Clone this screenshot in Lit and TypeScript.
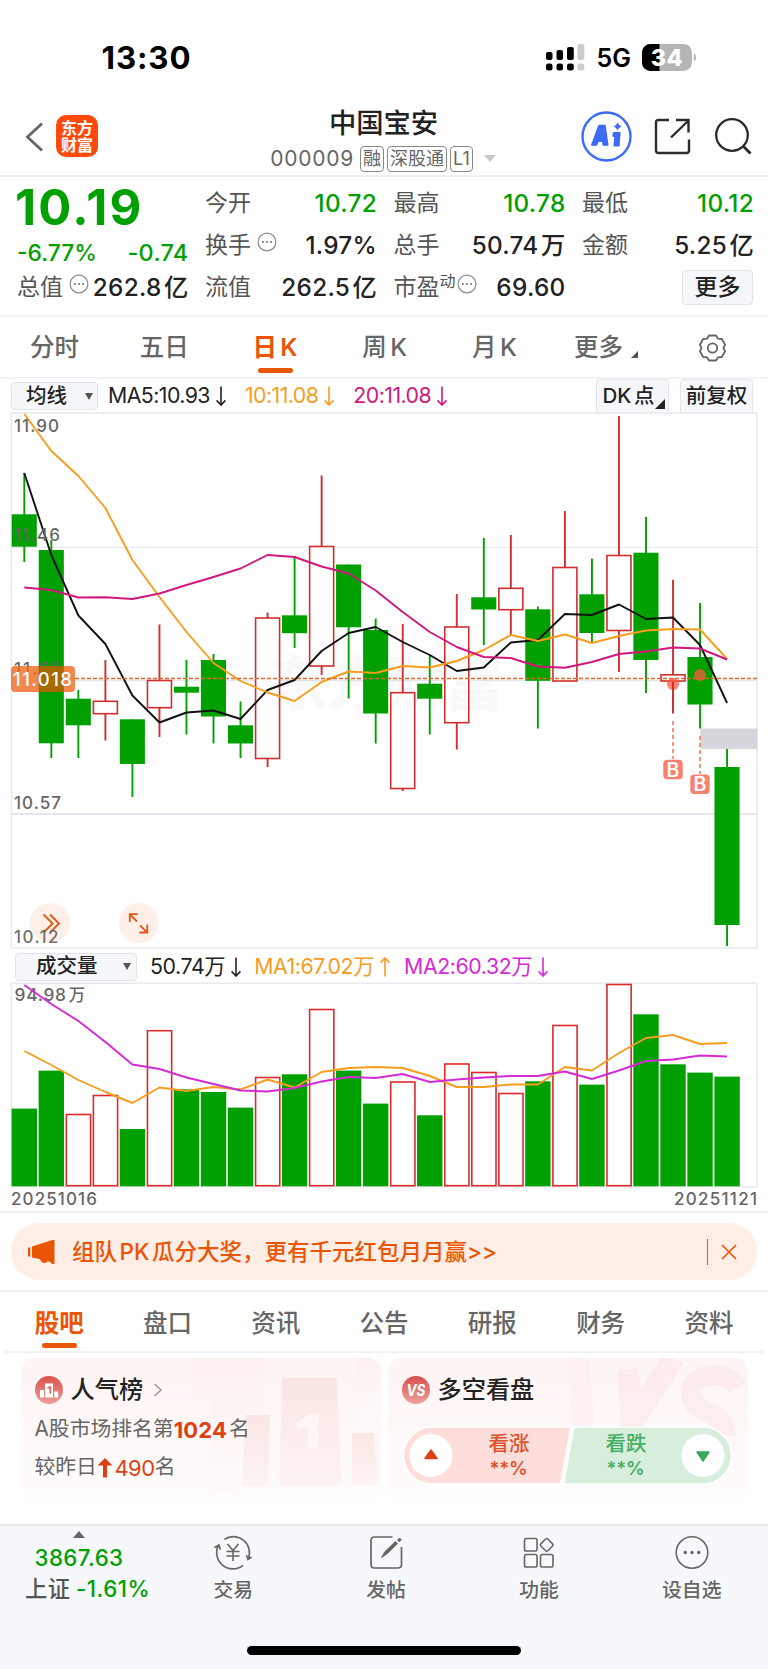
import { LitElement, html, svg, css } from "lit";
import { customElement } from "lit/decorators.js";

const GREEN = "#00a000";
const RED = "#cf2f2f";
const X0 = 24.3;
const STEP = 27.03;
const cx = (i: number) => X0 + STEP * i;

// [rising, high, body top, body bottom, low]
const candles: [number, number, number, number, number][] = [
  [0, 473, 514.3, 546.7, 562], [0, 540, 550, 743.3, 758], [0, 690, 698.7, 725.3, 758],
  [1, 660, 701.3, 713.7, 740.5], [0, 719.3, 719.3, 764, 797], [1, 624.5, 680.5, 707.7, 737],
  [0, 660, 686.7, 692.7, 734.5], [0, 654, 660, 716.5, 743.5], [0, 701.5, 725.3, 743.5, 758],
  [1, 612.5, 618, 758.5, 767], [0, 556, 615.3, 633.2, 648], [1, 475.5, 546.5, 666, 675],
  [0, 564.5, 564.5, 627.3, 698.5], [0, 618.5, 630, 713.5, 743.5], [1, 624, 692.7, 788.5, 791],
  [0, 655.5, 683.7, 698.7, 734.5], [1, 594, 627, 722.7, 749.5], [0, 538, 597.3, 609.5, 645],
  [1, 535, 588.3, 609.7, 635], [0, 606.5, 609.3, 680.8, 728.5], [1, 511, 567.5, 681, 681],
  [0, 558.5, 594.3, 633, 642.5], [1, 416, 555.5, 630.5, 672], [0, 517, 552.7, 660, 693],
  [1, 579.7, 674.8, 681, 713.5], [0, 603, 657, 704.5, 728.5], [0, 749, 767, 925, 946],
];
const ma5 = [473, 555, 615.5, 644, 695.5, 722.5, 712.5, 710.5, 719, 690, 680, 651, 633, 627, 642, 655, 671, 667.5, 642.5, 640, 614, 615, 604.5, 619, 617.5, 645, 703];
const ma10 = [414, 451, 476, 508, 560, 597, 632, 663, 681, 692.5, 701, 682, 671.5, 673, 666, 667.5, 661, 650, 635, 641, 634.5, 643, 636, 630.5, 629, 629.5, 659];
const ma20 = [587.5, 590, 597.5, 597.3, 599, 593.5, 585, 577, 568.5, 555, 557, 566.5, 573.5, 590.5, 612, 632, 647, 657, 658, 666.5, 667.8, 662, 654, 651.5, 647.5, 648.5, 659.5];
const volumes = [1109.3, 1071.3, 1114.5, 1095.5, 1129.7, 1030.7, 1090, 1092.7, 1108.3, 1077.5, 1075, 1009.5, 1071.3, 1104.3, 1082, 1116, 1064, 1072.5, 1093.5, 1082, 1025.5, 1085.3, 984.5, 1015, 1065, 1073.3, 1077.3];
const risingVolumes = new Set([2, 3, 5, 9, 11, 14, 16, 17, 18, 20, 22]);
const vma1 = [1051, 1065, 1080, 1092, 1103, 1087.5, 1091, 1087, 1089.5, 1079.5, 1087.5, 1072, 1068, 1067, 1068, 1076, 1087, 1087, 1084.5, 1084.5, 1067, 1070.5, 1053, 1038, 1035, 1044, 1043];
const vma2 = [985, 1004, 1021, 1042, 1064.5, 1069, 1077.5, 1084, 1090.5, 1091.5, 1088, 1081.5, 1077, 1078, 1074, 1082, 1079.5, 1077.5, 1076, 1076, 1071.5, 1079, 1070.5, 1061, 1059.5, 1055.5, 1056.5];
const line = (v: number[], color: string) =>
  svg`<polyline points=${v.map((y, i) => `${cx(i).toFixed(1)},${y}`).join(" ")} fill="none" stroke=${color} stroke-width="1.9" stroke-linejoin="round"/>`;

const FONT = css`
  :host { display: block; font-family: Inter, "Noto Sans CJK SC", sans-serif; line-height: 1; }
  * { box-sizing: border-box; }
  svg { display: block; flex: none; }
  svg text { font-family: Inter, "Noto Sans CJK SC", sans-serif; }
`;

const info = html`<svg width="20" height="20" viewBox="0 0 20 20"><circle cx="10" cy="10" r="8.9" fill="none" stroke="#8c8c8c" stroke-width="1.2"/><g fill="#777"><circle cx="5.9" cy="10" r="1.1"/><circle cx="10" cy="10" r="1.1"/><circle cx="14.1" cy="10" r="1.1"/></g></svg>`;
const arrow = (up = false) => html`<svg class="arr" width="12" height="20" viewBox="0 0 12 20"><path d=${up ? "M6 19.5V1M1.6 5.6 6 1l4.4 4.6" : "M6 .5V19M1.6 14.4 6 19l4.4-4.6"} fill="none" stroke="currentColor" stroke-width="1.6"/></svg>`;

@customElement("k-chart")
class KChart extends LitElement {
  static styles = [FONT];
  render() {
    return html`<svg width="768" height="537" viewBox="0 412 768 537">
      <rect x="11.4" y="413" width="745.6" height="535" fill="#fff" stroke="#e9eaee" stroke-width="1.6"/>
      <path d="M11 547.5H757M11 680.7H757" stroke="#e6e8ef" stroke-width="1.2"/>
      <path d="M11 814H757" stroke="#e4e5ee" stroke-width="2"/>
      <rect x="700.3" y="728.5" width="57" height="20.5" fill="#d4d6dc"/>
      ${candles.map(([up, h, t, b, l], i) => {
        const x = cx(i);
        return up
          ? svg`<path d=${`M${x} ${h}V${t}M${x} ${b}V${l}`} stroke=${RED} stroke-width="1.9"/><rect x=${x - 12} y=${t} width="24" height=${b - t} fill="#fff" stroke=${RED} stroke-width="1.6"/>`
          : svg`<path d=${`M${x} ${h}V${l}`} stroke=${GREEN} stroke-width="1.9"/><rect x=${x - 12.6} y=${t} width="25.1" height=${b - t} fill=${GREEN}/>`;
      })}
      <text x="268" y="706" font-size="60" font-weight="700" textLength="236" fill="#777" opacity=".04">东方财富</text>
      ${line(ma5, "#111")}${line(ma10, "#f69d1e")}${line(ma20, "#d0187f")}
      <g font-size="17" font-weight="500" fill="#666">
        <text x="14" y="431.5" textLength="45">11.90</text>
        <text x="14" y="540.8" textLength="46">11.46</text>
        <text x="14" y="675" textLength="45">11.01</text>
        <text x="14" y="808.8" textLength="47">10.57</text>
      </g>
      <path d="M75 678.5H757" stroke="#e2662a" stroke-width="1.6" stroke-dasharray="4 2"/>
      <rect x="11" y="666" width="64" height="26" rx="4" fill="#ef6a22" fill-opacity=".8"/>
      <path d="M38.7 666h25v26h-25z" fill="#a56a00"/>
      <text x="13" y="685.5" font-size="18.5" font-weight="500" fill="#fff" textLength="59">11.018</text>
      <g fill="#fb5a3c" fill-opacity=".75"><circle cx="673" cy="684" r="6"/><circle cx="700" cy="675" r="6"/></g>
      <path d=${`M${cx(24)} 682V713`} stroke=${RED} stroke-width="1.8"/>
      <path d="M673 721V759M700 736V774" stroke="#f58070" stroke-width="1.7" stroke-dasharray="4 3"/>
      <g fill="#f8806f"><rect x="663.3" y="759.8" width="19.4" height="19.4" rx="4"/><rect x="690.3" y="774.6" width="19.4" height="19.4" rx="4"/></g>
      <g fill="#fff" font-size="19.5" font-weight="600" text-anchor="middle"><text x="673" y="776.6">B</text><text x="700" y="791.4">B</text></g>
      <circle cx="50" cy="923" r="20" fill="#fef0e9"/><circle cx="138.7" cy="923" r="20" fill="#fef0e9"/>
      <path d="M43.5 914.5 52.7 923.5 43.5 932.5M50 914.5 59 923.5 50 932.5" fill="none" stroke="#e4560f" stroke-width="1.8"/>
      <path d="M129.8 922V914.2h8M130 914.5l7 7M147.3 924.5v8h-8M147 932.3l-7-7" fill="none" stroke="#e4560f" stroke-width="1.8"/>
      <text x="14" y="942.6" font-size="17" font-weight="500" fill="#666" fill-opacity=".95" textLength="44.5">10.12</text>
    </svg>`;
  }
}

@customElement("volume-chart")
class VolumeChart extends LitElement {
  static styles = [FONT];
  render() {
    return html`<svg width="768" height="229" viewBox="0 982 768 229">
      <rect x="11.4" y="983.3" width="745.6" height="203.5" fill="#fff" stroke="#e9eaee" stroke-width="1.6"/>
      <text x="14.5" y="1000.6" font-size="17.3" font-weight="500" fill="#666" textLength="51.5">94.98</text>
      <text x="68.8" y="1000.8" font-size="16.5" font-weight="500" fill="#666">万</text>
      ${volumes.map((t, i) =>
        risingVolumes.has(i)
          ? svg`<rect x=${cx(i) - 12} y=${t} width="24.2" height=${1185.7 - t} fill="#fff" stroke="#dc2a2a" stroke-width="1.6"/>`
          : svg`<rect x=${cx(i) - 12.7} y=${t - 0.7} width="25.4" height=${1187 - t} fill=${GREEN}/>`)}
      ${line(vma1, "#f69d1e")}${line(vma2, "#d42bd4")}
      <g font-size="17" font-weight="500" fill="#666">
        <text x="11" y="1204.6" textLength="86">20251016</text>
        <text x="674" y="1204.6" textLength="83">20251121</text>
      </g>
    </svg>`;
  }
}

@customElement("app-root")
class AppRoot extends LitElement {
  static styles = [FONT, css`
    :host { width: 768px; height: 1669px; background: #fff; color: #222; overflow: hidden; }
    .row { display: flex; align-items: center; }
    .status { height: 100px; padding: 14px 71px 0 101.5px; }
    .time { font-size: 31.3px; font-weight: 700; color: #000; letter-spacing: .9px; flex: 1; padding-top: 3px; }
    .net { font-size: 25px; font-weight: 600; color: #000; margin: 3px 11px 0 12px; }
    .head { height: 77px; border-bottom: 2px solid #efefef; padding: 0 16px 0 25px; }
    .back { margin-top: -2px; }
    .logo { width: 42px; height: 42px; border-radius: 10px; background: #ff4a0a; color: #fff; display: grid; place-content: center; margin: -3px 0 0 12px; font-size: 16px; font-weight: 700; line-height: 17px; padding-top: 1px; }
    .title { flex: 1; display: flex; flex-direction: column; align-items: center; margin: 5px 0 0 -1px; padding-left: 89px; }
    .name { font-size: 27.3px; font-weight: 500; line-height: 30px; }
    .code { display: flex; align-items: center; gap: 3px; font-size: 21px; letter-spacing: .75px; color: #666; margin-top: 7px; line-height: 26px; margin-left: -1px; }
    .code span:first-child { margin-right: 3px; }
    .tag { font-size: 18px; letter-spacing: 0; border: 1.3px solid #888; border-radius: 4px; height: 26px; line-height: 23px; padding: 0 2px; }
    .down { border: 6.5px solid transparent; border-top: 7px solid #c8c8c8; border-bottom: 0; margin-left: 8px; }
    .acts { gap: 22px; margin-top: -2px; }
    .acts svg:last-child { margin-left: 2px; }
    .quote { height: 140px; padding: 5px 15px 0 17px; display: grid; grid-template-columns: 170.5px repeat(3, 171px); column-gap: 17.5px; grid-template-rows: repeat(3, 42px); border-bottom: 2px solid #f3f3f5; align-items: center; font-size: 23px; }
    .cell { display: flex; align-items: center; white-space: nowrap; padding-top: 1px; }
    .cell .l { color: #555; font-size: 23px; }
    .cell .v { margin-left: auto; font-weight: 500; font-size: 24.3px; letter-spacing: .3px; word-spacing: -4.5px; color: #222; margin-right: -1px; }
    .cell .v.g, .g { color: #00a000; }
    .cell .i { margin: -7px 0 0 6px; }
    .cell sup + .i { margin-left: 1px; }
    .main { grid-row: span 2; display: flex; flex-direction: column; justify-content: space-between; height: 84px; padding: 6px 0 1px; }
    .price { font-size: 49px; font-weight: 700; color: #00a000; letter-spacing: 2.2px; line-height: 40px; margin-left: -2px; }
    .chg { display: flex; justify-content: space-between; font-size: 22.8px; font-weight: 500; color: #00a000; line-height: 24px; }
    .chg span:last-child { font-size: 23.5px; letter-spacing: .3px; margin-right: -1px; }
    .btn { background: #f6f7fa; border: 1.5px solid #e1e4ea; border-radius: 4px; display: flex; align-items: center; justify-content: center; font-weight: 500; color: #222; }
    .more { width: 71px; height: 35px; margin-left: auto; font-size: 23px; }
    sup { font-size: 16px; align-self: flex-start; margin-top: -2px; line-height: 16px; color: #555; }
    .tabs { border-bottom: 2px solid #f3f3f5; display: grid; align-items: center; font-size: 24.5px; font-weight: 500; color: #666; text-align: center; word-spacing: -3px; }
    .ktabs { height: 62px; grid-template-columns: 109px 110.5px 111px 108.5px 111px 112px 100px; padding-top: 1px; }
    .tab { position: relative; display: flex; justify-content: center; align-items: center; white-space: nowrap; }
    .on { color: #ea5504; font-weight: 600; }
    .on::after { content: ""; position: absolute; left: 50%; bottom: -13px; width: 35px; height: 5px; margin-left: -17.5px; border-radius: 3px; background: #ea5504; }
    .corner { width: 0; height: 0; border-left: 7px solid transparent; border-bottom: 7px solid #555; margin: 14px 0 0 8px; }
    .corner.big { border-left-width: 10px; border-bottom: 10px solid #222; margin: 16px 0 0 1px; }
    .mas { height: 33px; padding: 1px 15px 0 11px; font-size: 21.3px; color: #222; letter-spacing: -.55px; }
    .mas > span { display: flex; align-items: center; gap: 5px; white-space: nowrap; }
    .mas > .btn { letter-spacing: 0; font-size: 20.5px; width: 73px; height: 35px; }
    .mas > .drop { height: 28px; width: 87px; padding: 0 4px 0 14px; justify-content: space-between; }
    .mas > .drop.vol { width: 122px; padding: 0 5px 0 20px; margin-left: 4px; }
    .mas > .dk { margin-left: auto; gap: 0; padding-left: 3px; word-spacing: -3px; }
    .mas > .fq { margin-left: 11px; }
    .drop::after { content: ""; border: 4.5px solid transparent; border-top: 7.5px solid #555; border-bottom: 0; }
    .o { color: #f69d1e; margin-left: 18px; } .p { color: #d0187f; margin-left: 18px; } .m { color: #d42bd4; margin-left: 13px; }
    .volrow { letter-spacing: -.4px; padding-top: 2px; } .volrow .o { margin-left: 12px; }
    .first { margin-left: 10px; } .volrow .first { margin-left: 13px; }
    .arr { margin-top: 1px; }
    .sep { border-top: 2px solid #efefef; }
    .banner { margin: 10px 11px; height: 57px; border-radius: 29px; background: #feeee6; color: #ea5504; padding: 1px 20px 0 17px; font-size: 22.5px; font-weight: 500; word-spacing: -3.5px; }
    .banner .t { margin-left: 17px; flex: 1; white-space: nowrap; }
    .banner i { width: 1.5px; height: 26px; background: #ea5504; margin-right: 13px; }
    .btabs { grid-template-columns: repeat(7, 108.3px); margin: 0 5px; height: 61px; border-color: #f0f0f2; padding-top: 3px; }
    .btabs .on::after { bottom: -12.5px; }
    .cards { display: grid; grid-template-columns: 360px 360px; gap: 7px; padding: 5px 20.5px 0; height: 171px; }
    .card { height: 143px; border-radius: 14px; background: linear-gradient(#fef5f4, #fffafa 75%, #fffdfd); position: relative; padding: 18px 0 0 14px; overflow: hidden; }
    .card > svg.bg { position: absolute; left: 0; top: 0; }
    .ct { display: flex; align-items: center; gap: 8px; height: 28px; font-size: 24.2px; font-weight: 500; position: relative; }
    .chev { margin-left: 2px; }
    .tx { font-size: 20.8px; color: #666; position: relative; white-space: nowrap; display: flex; align-items: center; height: 24px; margin-top: 13.5px; }
    .tx + .tx { margin-top: 14px; }
    .tx b { color: #dd4113; font-size: 22px; letter-spacing: .2px; } .tx em { color: #dd4113; font-style: normal; font-size: 22px; letter-spacing: -.5px; }
    .vs { position: absolute; left: 14.5px; top: 67.5px; }
    .bottom { height: 145px; background: #f7f8fb; border-top: 2px solid #e8e8ea; display: grid; grid-template-columns: 157px 152.5px 153px 153px 152.5px; position: relative; }
    .nav { display: flex; flex-direction: column; align-items: center; padding-top: 7.5px; font-size: 19.8px; font-weight: 500; color: #666; gap: 11px; white-space: nowrap; }
    .idx { display: flex; flex-direction: column; align-items: center; padding: 5px 0 0 18px; white-space: nowrap; }
    .idx i { border: 6px solid transparent; border-bottom: 7px solid #666; border-top: 0; margin-right: 17px; }
    .idx .n { font-size: 22.3px; font-weight: 500; margin: 9px 17px 0 0; line-height: 22px; letter-spacing: .4px; }
    .idx .s { margin-top: 9px; font-size: 22.3px; font-weight: 500; color: #555; line-height: 22px; letter-spacing: .5px; word-spacing: -1px; }
    .home { position: absolute; left: 247px; top: 119.5px; width: 274px; height: 9.5px; border-radius: 5px; background: #000; }
  `];

  render() {
    const cell = (l: string, v: string, g = false) => html`<div class="cell"><span class="l">${l}</span><span class="v ${g ? "g" : ""}">${v}</span></div>`;
    return html`
      <div class="row status">
        <div class="time">13:30</div>
        <svg width="39" height="27" viewBox="0 0 39 27">
          <g><rect x="0" y="8" width="6.5" height="8" rx="2"/><rect x="10.5" y="6" width="6.5" height="10" rx="2"/><rect x="21" y="3" width="6.8" height="13" rx="2"/>
          <rect x="0" y="19.5" width="6.5" height="7" rx="2.3"/><rect x="10.5" y="19.5" width="6.5" height="7" rx="2.3"/><rect x="21" y="19.5" width="6.8" height="7" rx="2.3"/></g>
          <g fill="#ccc"><rect x="31.5" y="0" width="6.8" height="16" rx="2"/><rect x="31.5" y="19.5" width="6.8" height="7" rx="2.3"/></g>
        </svg>
        <div class="net">5G</div>
        <svg width="55" height="27" viewBox="0 0 55 27">
          <defs><clipPath id="bat"><rect width="50" height="27" rx="8.5"/></clipPath></defs>
          <g clip-path="url(#bat)"><rect width="50" height="27" fill="#b5b5b5"/><rect width="17.5" height="27" fill="#000"/></g>
          <path d="M51.8 9.5c3 1 3 7 0 8z" fill="#b5b5b5"/>
          <text x="8.7" y="21.8" font-size="23.5" font-weight="800" fill="#fff" textLength="32">34</text>
        </svg>
      </div>
      <div class="row head">
        <svg class="back" width="19" height="30" viewBox="0 0 19 30"><path d="M17 1.5 2.5 15 17 28.5" fill="none" stroke="#666" stroke-width="2.8"/></svg>
        <div class="logo"><span>东方</span><span>财富</span></div>
        <div class="title">
          <div class="name">中国宝安</div>
          <div class="code"><span>000009</span><span class="tag">融</span><span class="tag">深股通</span><span class="tag">L1</span><span class="down"></span></div>
        </div>
        <div class="row acts">
          <svg width="51" height="51" viewBox="0 0 51 51"><circle cx="25.5" cy="25.5" r="24" fill="none" stroke="#3d6bf5" stroke-width="2.4"/>
            <g fill="#3d6bf5" stroke="#3d6bf5" stroke-linejoin="round" stroke-width="1.600"><path fill-rule="evenodd" d="M18 14.600h6l2.700 19.400h-4.500l-.5-3.800h-4.600l-1.600 3.800h-4.700zM21 21l-2 5.300h2.400z"/><path d="M32.600 21.800h6.200l-1 13h-4.500l.8-9.700h-2z"/></g>
            <path d="M36.600 11.200q.8 3 4 4.200-3.200 1-4 4.200-.8-3.200-4-4.200 3.200-1.200 4-4.200z" fill="#3d6bf5"/></svg>
          <svg width="37" height="37" viewBox="0 0 37 37"><path d="M15 2H4.500Q2 2 2 4.500V32.500Q2 35 4.500 35H32.500Q35 35 35 32.500V21.500M22 2H34.500V14.500M34.500 2.500 17 19.500" fill="none" stroke="#2c2c2c" stroke-width="2.400"/></svg>
          <svg width="37" height="37" viewBox="0 0 37 37"><circle cx="17" cy="17" r="15.800" fill="none" stroke="#2c2c2c" stroke-width="2.300"/><path d="M28 28 35.500 35.500" stroke="#2c2c2c" stroke-width="2.800"/></svg>
        </div>
      </div>
      <div class="quote">
        <div class="main"><div class="price">10.19</div><div class="chg"><span>-6.77%</span><span>-0.74</span></div></div>
        ${cell("今开", "10.72", true)}${cell("最高", "10.78", true)}${cell("最低", "10.12", true)}
        <div class="cell"><span class="l">换手</span><span class="i">${info}</span><span class="v">1.97%</span></div>
        ${cell("总手", "50.74 万")}${cell("金额", "5.25 亿")}
        <div class="cell"><span class="l">总值</span><span class="i">${info}</span><span class="v">262.8 亿</span></div>
        ${cell("流值", "262.5 亿")}
        <div class="cell"><span class="l">市盈</span><sup>动</sup><span class="i">${info}</span><span class="v">69.60</span></div>
        <div class="btn more">更多</div>
      </div>
      <div class="tabs ktabs">
        <div class="tab">分时</div><div class="tab">五日</div><div class="tab on">日 K</div><div class="tab">周 K</div><div class="tab">月 K</div>
        <div class="tab">更多<span class="corner"></span></div>
        <div class="tab"><svg width="29" height="28" viewBox="0 0 29 28"><path d="M11 1.500h7l2 3.200 3.800.3 3.300 5.700-1.600 3.300 1.600 3.300-3.300 5.700-3.800.3-2 3.200h-7l-2-3.200-3.800-.3-3.300-5.700 1.600-3.300-1.600-3.300 3.300-5.700 3.800-.3z" fill="none" stroke="#666" stroke-width="1.800" stroke-linejoin="round"/><circle cx="14.500" cy="14" r="4.700" fill="none" stroke="#666" stroke-width="1.800"/></svg></div>
      </div>
      <div class="row mas">
        <span class="btn drop">均线</span>
        <span class="first">MA5:10.93 ${arrow()}</span>
        <span class="o">10:11.08 ${arrow()}</span>
        <span class="p">20:11.08 ${arrow()}</span>
        <span class="btn dk">DK 点<i class="corner big"></i></span>
        <span class="btn fq">前复权</span>
      </div>
      <k-chart></k-chart>
      <div class="row mas volrow">
        <span class="btn drop vol">成交量</span>
        <span class="first">50.74万 ${arrow()}</span>
        <span class="o">MA1:67.02万 ${arrow(true)}</span>
        <span class="m">MA2:60.32万 ${arrow()}</span>
      </div>
      <volume-chart></volume-chart>
      <div class="sep"></div>
      <div class="row banner">
        <svg width="27" height="24" viewBox="0 0 27 24"><path d="M0 7.500h2.300v9H0zM4 6.500 24.500 0h2v24h-2.500l-2.500-2.500h-2.200q-1.500 2.500-5 1l-2.800-3.500L4 17.500z" fill="#ea5504"/></svg>
        <span class="t">组队 PK 瓜分大奖，更有千元红包月月赢&gt;&gt;</span><i></i>
        <svg width="16" height="16" viewBox="0 0 16 16"><path d="M1 1 15 15M15 1 1 15" stroke="#ea5504" stroke-width="1.600"/></svg>
      </div>
      <div class="sep"></div>
      <div class="tabs btabs">
        <div class="tab on">股吧</div>${["盘口", "资讯", "公告", "研报", "财务", "资料"].map((t) => html`<div class="tab">${t}</div>`)}
      </div>
      <div class="cards">
        <div class="card">
          <svg class="bg" width="360" height="143" viewBox="0 0 360 143"><defs><linearGradient id="g1" x1="0" y1="0" x2="0" y2="1"><stop offset="0" stop-color="#fae3e1"/><stop offset="1" stop-color="#fdf3f2"/></linearGradient><linearGradient id="g4" x1="0" y1="0" x2="0" y2="1"><stop offset="0" stop-color="#fdf1ef"/><stop offset="1" stop-color="#fffafa"/></linearGradient></defs>
            <path d="M171 0h73l-2 56h-22l-4 80h-26V42h-19z" fill="url(#g4)"/>
            <g fill="url(#g1)" opacity=".85"><path d="M261 20h55l4 108h-62z"/><path d="M224 57h25l-2 71h-26z"/><path d="M331 75h22l4 52h-26z"/></g>
            <path d="M276 65l13-9h9l-1 35h-11l1-22-11 3z" fill="#fff6f5"/><path d="M334 0h26v60h-22z" fill="url(#g4)"/></svg>
          <div class="ct"><svg width="28" height="28" viewBox="0 0 28 28"><defs><linearGradient id="g2" x1="0" y1="0" x2="0" y2="1"><stop offset="0" stop-color="#d8504c"/><stop offset="1" stop-color="#efa09c"/></linearGradient></defs><circle cx="14" cy="14" r="14" fill="url(#g2)"/><path d="M10 7.500h8V21.500h-8zM5 14h4v7.500H5zM19.200 15.500h3.800l.3 6h-4z" fill="#fff"/><path d="M12.500 12.300l2-1.300h.8v6.800" fill="none" stroke="#d96a66" stroke-width="1.700"/></svg>人气榜<svg class="chev" width="10" height="14" viewBox="0 0 10 14"><path d="M1.500 1 8 7 1.500 13" fill="none" stroke="#999" stroke-width="1.500"/></svg></div>
          <div class="tx">A股市场排名第<b>1024</b>&hairsp;名</div>
          <div class="tx">较昨日<svg width="16" height="20" viewBox="0 0 16 20"><path d="M8 0 15.500 7.500H10V19.500H6V7.500H.5z" fill="#dd4113"/></svg><em>&hairsp;490</em>名</div>
        </div>
        <div class="card">
          <svg class="bg" width="360" height="143" viewBox="0 0 360 143"><g fill="none" stroke="#fcecea" opacity=".8"><path d="M190 0 196 68" stroke-width="22" opacity=".6"/><path d="M240 11 244 66 285 0" stroke-width="22"/><path d="M350 30C338 10 300 14 303 38 306 58 338 50 338 78" stroke-width="20"/></g></svg>
          <div class="ct"><svg width="28" height="28" viewBox="0 0 28 28"><circle cx="14" cy="14" r="14" fill="url(#g3)"/><defs><linearGradient id="g3" x1="0" y1="0" x2="0" y2="1"><stop offset="0" stop-color="#d8504c"/><stop offset="1" stop-color="#efa09c"/></linearGradient></defs><text x="4.500" y="20" font-size="16" font-weight="700" font-style="italic" fill="#fff" textLength="19" lengthAdjust="spacingAndGlyphs">VS</text></svg>多空看盘</div>
          <svg class="vs" width="331" height="60" viewBox="0 0 331 60">
            <path d="M30 1H169L158.500 58H30A28.500 28.500 0 0 1 30 1z" fill="#fddedb" stroke="#fff" stroke-width="1.500"/>
            <path d="M172 1H301A28.500 28.500 0 0 1 301 58H161.500z" fill="#d7eedd" stroke="#fff" stroke-width="1.500"/>
            <circle cx="29" cy="29.500" r="21.500" fill="#fff"/><circle cx="301" cy="29.500" r="21.500" fill="#fff"/>
            <path d="M29 24 35 32.500H23z" fill="#dd4113" stroke="#dd4113" stroke-width="1.500" stroke-linejoin="round"/><path d="M301 35 307 26H295z" fill="#38a85a" stroke="#38a85a" stroke-width="1.500" stroke-linejoin="round"/>
            <g font-size="20.500" font-weight="500" text-anchor="middle"><text x="107" y="25" fill="#e0502a">看涨</text><text x="224" y="25" fill="#45ad66">看跌</text></g>
            <g font-size="18.500" font-weight="600" text-anchor="middle"><text x="106.500" y="48.500" textLength="38" fill="#e0502a">**%</text><text x="223.500" y="48.500" textLength="38" fill="#45ad66">**%</text></g>
          </svg>
        </div>
      </div>
      <div class="bottom">
        <div class="idx"><i></i><div class="n g">3867.63</div><div class="s">上证 <span class="g">-1.61%</span></div></div>
        <div class="nav"><svg width="38" height="36" viewBox="0 0 38 36" fill="none" stroke="#666" stroke-width="1.600"><path d="M10.300 5.300A16.200 16.200 0 0 1 34 25.500M29 31.300A16.200 16.200 0 0 1 4.600 11M.5 13.500 5 11 6.300 15.800M37.500 23 34 25.500 32.500 21M13.500 10 19 16.500 24.500 10M12.500 17.500h13M12.500 22h13M19 16.500v10.500"/></svg>交易</div>
        <div class="nav"><svg width="36" height="36" viewBox="0 0 36 36"><path d="M24.500 3H6.500Q3 3 3 6.500v24Q3 34 6.500 34h23.500Q33.500 34 33.500 30.500V13" fill="none" stroke="#666" stroke-width="1.700"/><path d="M13.500 23.500 17 17.500 27.500 7.500 29.500 9.500 19 19.800zM29.500 6l2-2 1.800 1.800-2 2z" fill="#666" stroke="#666"/></svg>发帖</div>
        <div class="nav"><svg width="36" height="36" viewBox="0 0 36 36" fill="none" stroke="#666" stroke-width="1.600"><rect x="3.500" y="4.500" width="12.500" height="12.500" rx="1.800"/><rect x="3.500" y="20.500" width="12.500" height="12.500" rx="1.800"/><rect x="19.500" y="20.500" width="12.500" height="12.500" rx="1.800"/><rect x="20.800" y="6" width="9.800" height="9.800" rx="1.500" transform="rotate(45 25.700 10.900)"/></svg>功能</div>
        <div class="nav"><svg width="36" height="36" viewBox="0 0 36 36"><circle cx="18" cy="18.500" r="15.800" fill="none" stroke="#666" stroke-width="1.600"/><g fill="#666"><circle cx="11.300" cy="18.500" r="1.700"/><circle cx="18" cy="18.500" r="1.700"/><circle cx="24.700" cy="18.500" r="1.700"/></g></svg>设自选</div>
        <div class="home"></div>
      </div>
    `;
  }
}
